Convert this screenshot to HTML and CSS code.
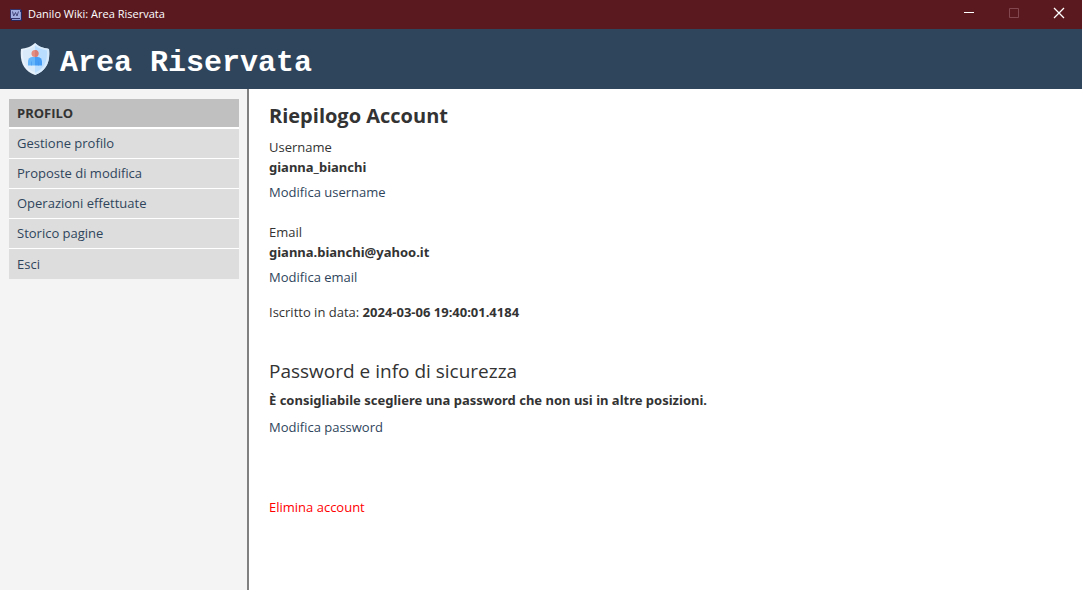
FILE: index.html
```html
<!DOCTYPE html>
<html lang="it">
<head>
<meta charset="utf-8">
<title>Danilo Wiki: Area Riservata</title>
<link rel="stylesheet" href="styles.css">
</head>
<body>
<div class="titlebar">
  <svg class="app-icon" viewBox="0 0 12 12" aria-hidden="true">
    <path d="M1 1h11v11H1z" fill="#27275c"/>
    <path d="M0 0h11v10H0z" fill="#34346b"/>
    <path d="M1 1h9v8H1z" fill="#a3aee0"/>
    <path d="M2.500 2.500l1.200 4.500L5.500 3.500l1.500 3.500L8.500 2.500" fill="none" stroke="#3a3c70" stroke-width=".9"/>
    <path d="M2 10.500h8.500V3" fill="none" stroke="#8f99d2"/>
  </svg>
  <span class="window-title">Danilo Wiki: Area Riservata</span>
  <div class="window-controls">
    <button type="button" class="control" aria-label="Riduci a icona"><svg viewBox="0 0 12 12"><path d="M1 5.500h10" stroke="#fff"/></svg></button>
    <button type="button" class="control" aria-label="Ingrandisci" disabled><svg viewBox="0 0 12 12"><path d="M1.500 1.500h9v9h-9z" stroke="#83484f"/></svg></button>
    <button type="button" class="control" aria-label="Chiudi"><svg viewBox="0 0 12 12"><path d="M1 1l10 10M11 1L1 11" stroke="#fff" stroke-width="1.300"/></svg></button>
  </div>
</div>
<header class="header">
  <svg class="shield" viewBox="0 0 30 32" aria-hidden="true">
    <path d="M15 0C11 4 6 5 1 6C-.5 19 4 28 15 32C26 28 30.500 19 29 6C24 5 19 4 15 0z" fill="#e6f1fc"/>
    <path d="M15 0C19 4 24 5 29 6C30.500 19 26 28 15 32z" fill="#d6eafd"/>
    <path d="M15 2.500C11.500 5.500 7 6.800 3 7.500C2.300 18 6 26 15 29.700z" fill="#d9eafb"/>
    <path d="M15 2.500C18.500 5.500 23 6.800 27 7.500C27.700 18 24 26 15 29.700z" fill="#b9ddff"/>
    <path d="M8 22.500v-4a4.500 4.500 0 0 1 4.500-4.500H15v8.500z" fill="#65b5fb"/>
    <path d="M22 22.500v-4a4.500 4.500 0 0 0-4.500-4.500H15v8.500z" fill="#459df5"/>
    <path d="M11.500 18.500v4M18.500 18.500v4" stroke="#3f94ee" stroke-width=".6"/>
    <circle cx="15" cy="10.500" r="3.500" fill="#e38c80"/>
    <path d="M15 7a3.500 3.500 0 0 1 0 7z" fill="#d77d73"/>
  </svg>
  <h1 class="header-title">Area Riservata</h1>
</header>
<div class="layout">
  <aside class="sidebar">
    <nav class="menu" aria-labelledby="menu-title">
      <h2 class="menu-title" id="menu-title">PROFILO</h2>
      <a class="menu-item" href="#profilo">Gestione profilo</a>
      <a class="menu-item" href="#proposte">Proposte di modifica</a>
      <a class="menu-item" href="#operazioni">Operazioni effettuate</a>
      <a class="menu-item" href="#storico">Storico pagine</a>
      <a class="menu-item menu-exit" href="#esci">Esci</a>
    </nav>
  </aside>
  <main class="content">
    <h2 class="summary-title">Riepilogo Account</h2>
    <section class="field">
      <p>Username</p>
      <p><strong>gianna_bianchi</strong></p>
      <a class="action" href="#username">Modifica username</a>
    </section>
    <section class="field">
      <p>Email</p>
      <p><strong>gianna.bianchi@yahoo.it</strong></p>
      <a class="action" href="#email">Modifica email</a>
    </section>
    <p class="joined">Iscritto in data: <strong>2024-03-06 19:40:01.4184</strong></p>
    <section class="security">
      <h2 class="security-title">Password e info di sicurezza</h2>
      <p class="advice"><strong>È consigliabile scegliere una password che non usi in altre posizioni.</strong></p>
      <a class="action" href="#password">Modifica password</a>
    </section>
    <a class="delete" href="#elimina">Elimina account</a>
  </main>
</div>
</body>
</html>
```
FILE: styles.css
```css
* {
  box-sizing: border-box;
}

body {
  margin: 0;
  min-height: 100vh;
  display: flex;
  flex-direction: column;
  background: #fff;
  color: #333;
  font: 13px/20px "Open Sans", "Noto Sans", sans-serif;
}

h1, h2, p {
  margin: 0;
}

a {
  color: #2f455c;
  text-decoration: none;
}

strong {
  font-family: "Noto Sans", sans-serif;
}

.titlebar {
  display: flex;
  align-items: center;
  height: 29px;
  padding-left: 10px;
  background: #5a191f;
  color: #fff;
  font-size: 11px;
}

.app-icon {
  width: 12px;
  height: 12px;
  margin-right: 6px;
}

.window-title {
  padding-bottom: 2px;
}

.window-controls {
  display: flex;
  align-self: stretch;
  margin-left: auto;
}

.control {
  display: flex;
  align-items: center;
  justify-content: center;
  width: 45px;
  padding: 0 1px 3px 0;
  border: 0;
  background: none;
}

.control svg {
  width: 12px;
  height: 12px;
  fill: none;
}

.header {
  display: flex;
  align-items: center;
  gap: 10px;
  height: 60px;
  padding: 0 20px;
  background: #2f455c;
  color: #fff;
}

.shield {
  width: 30px;
  height: 32px;
}

.header-title {
  padding-top: 7px;
  font: bold 30px/40px "Liberation Mono", monospace;
}

.layout {
  display: flex;
  flex: 1;
}

.sidebar {
  flex: none;
  width: 249px;
  padding: 10px 8px 10px 9px;
  border-right: 2px solid #808080;
  background: #f4f4f4;
}

.menu {
  display: flex;
  flex-direction: column;
  gap: 1px;
  background: #fff;
}

.menu-title {
  height: 29px;
  padding: 0 8px;
  border-bottom: 1px solid #fff;
  background: #c0c0c0;
  font-size: 13px;
  line-height: 29px;
}

.menu-item {
  padding: 0 8px;
  background: #ddd;
  line-height: 29px;
}

.menu-exit {
  padding-top: 1px;
}

.content {
  flex: 1;
  padding: 12px 20px;
}

.summary-title {
  margin-bottom: 6px;
  font-size: 20px;
  line-height: 30px;
}

.field {
  margin-bottom: 20px;
}

.action {
  display: inline-block;
  margin-top: 5px;
}

.field + .joined {
  margin-top: -5px;
}

.security {
  margin: 34px 0 60px;
}

.security-title {
  margin-bottom: 4px;
  font-size: 19px;
  font-weight: normal;
  line-height: 30px;
}

.advice {
  margin-bottom: 2px;
}

.delete {
  color: #f00;
}
```
